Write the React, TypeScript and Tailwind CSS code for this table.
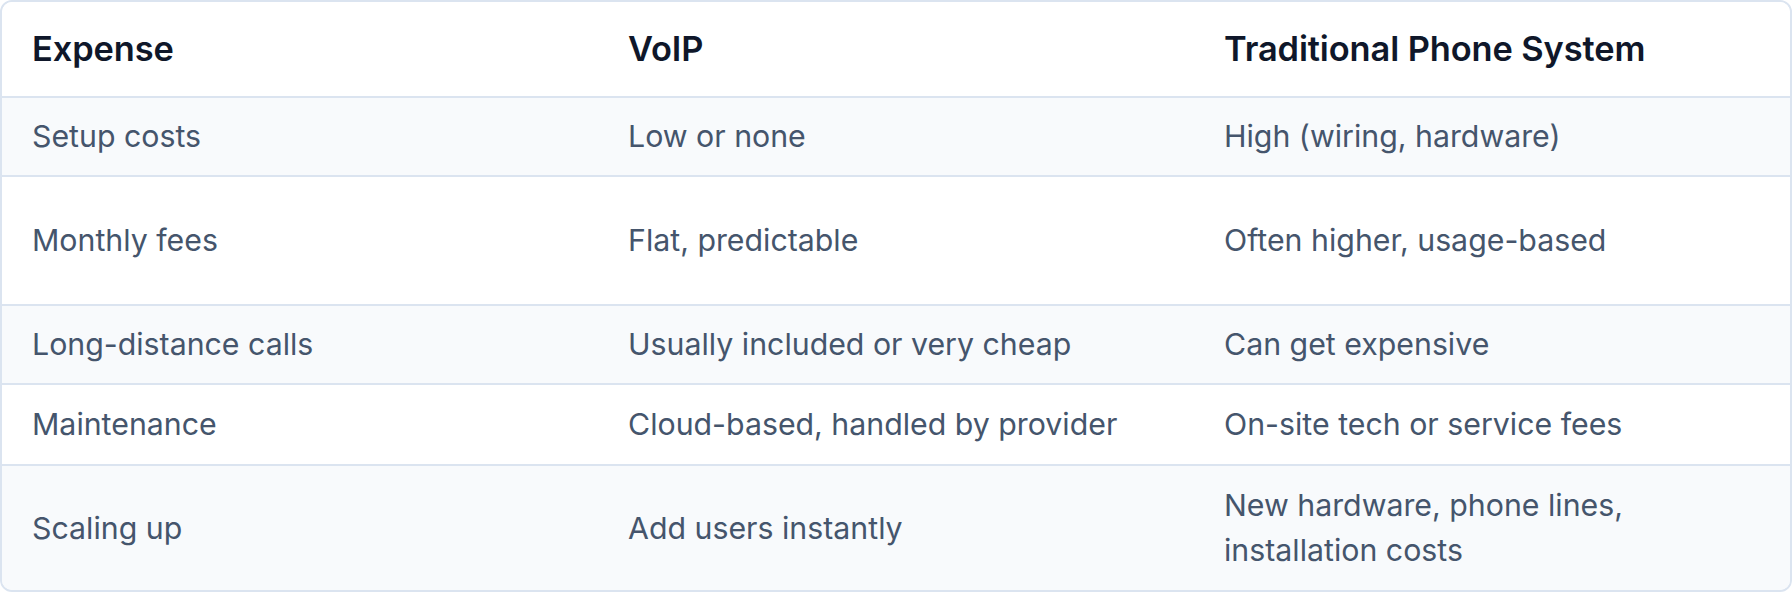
import React from "react";

const rows: { cells: React.ReactNode[]; h: string; striped: boolean }[] = [
  { cells: ["Setup costs", "Low or none", "High (wiring, hardware)"], h: "h-[79px]", striped: true },
  { cells: ["Monthly fees", "Flat, predictable", "Often higher, usage-based"], h: "h-[129px]", striped: false },
  { cells: ["Long-distance calls", "Usually included or very cheap", "Can get expensive"], h: "h-[79px]", striped: true },
  { cells: ["Maintenance", "Cloud-based, handled by provider", "On-site tech or service fees"], h: "h-[81px]", striped: false },
  {
    cells: [
      "Scaling up",
      "Add users instantly",
      <>
        New hardware, phone lines,
        <br />
        installation costs
      </>,
    ],
    h: "h-[126px]",
    striped: true,
  },
];

export default function App() {
  return (
    <div className="w-[1792px] h-[592px] bg-white" style={{ fontFamily: "Inter, 'Noto Sans', sans-serif" }}>
      <div className="w-full h-full border-2 border-[#dbe4f0] rounded-xl overflow-hidden flex flex-col">
        <div className="grid grid-cols-3 h-[94px] shrink-0 items-center bg-white">
          {["Expense", "VoIP", "Traditional Phone System"].map((t) => (
            <div key={t} className="px-[30px] text-[34.4px] font-semibold text-[#0f172a] leading-none tracking-[-0.1px]">
              {t}
            </div>
          ))}
        </div>
        {rows.map((r, i) => (
          <div
            key={i}
            className={`grid grid-cols-3 shrink-0 items-center border-t-2 border-[#dbe4f0] ${r.h} ${r.striped ? "bg-[#f8fafc]" : "bg-white"}`}
          >
            {r.cells.map((c, j) => (
              <div key={j} className="px-[30px] text-[30.3px] leading-[45px] text-[#45556c]">
                {c}
              </div>
            ))}
          </div>
        ))}
      </div>
    </div>
  );
}
